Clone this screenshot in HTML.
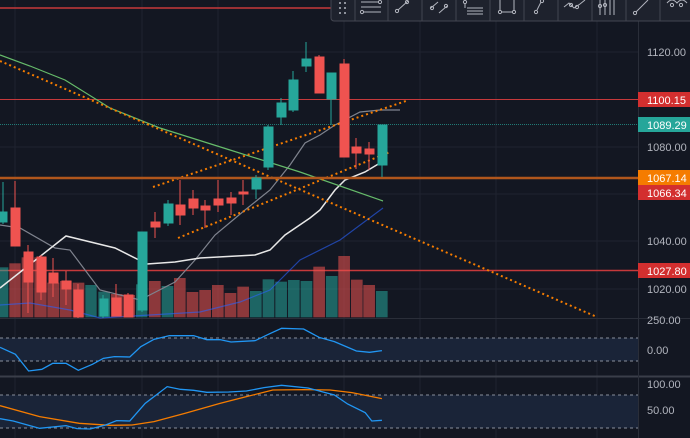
<!DOCTYPE html>
<html><head><meta charset="utf-8"><style>
html,body{margin:0;padding:0;background:#131722;width:690px;height:438px;overflow:hidden;font-family:"Liberation Sans",sans-serif}
svg{display:block}
</style></head><body>
<svg width="690" height="438" viewBox="0 0 690 438" xmlns="http://www.w3.org/2000/svg">
<rect width="690" height="438" fill="#131722"/>
<g stroke="#1f2330" stroke-width="1">
<line x1="15" y1="0" x2="15" y2="438"/><line x1="142" y1="0" x2="142" y2="438"/><line x1="218" y1="0" x2="218" y2="438"/>
<line x1="344" y1="0" x2="344" y2="438"/><line x1="420" y1="0" x2="420" y2="438"/><line x1="496" y1="0" x2="496" y2="438"/><line x1="597" y1="0" x2="597" y2="438"/>
<line x1="0" y1="52" x2="638" y2="52"/><line x1="0" y1="147" x2="638" y2="147"/><line x1="0" y1="194" x2="638" y2="194"/><line x1="0" y1="241" x2="638" y2="241"/><line x1="0" y1="289" x2="638" y2="289"/>
<line x1="0" y1="349" x2="638" y2="349"/><line x1="0" y1="410" x2="638" y2="410"/>
</g>
<rect x="0" y="338" width="638" height="23" fill="#1a2438"/>
<rect x="0" y="395" width="638" height="33" fill="#1a2438"/>
<g stroke="#8a8f9c" stroke-width="1" stroke-dasharray="3,3">
<line x1="0" y1="338" x2="638" y2="338"/><line x1="0" y1="361" x2="638" y2="361"/>
<line x1="0" y1="395" x2="638" y2="395"/><line x1="0" y1="428" x2="638" y2="428"/>
</g>
<line x1="0" y1="318.5" x2="690" y2="318.5" stroke="#2a2e39"/>
<line x1="0" y1="376.5" x2="690" y2="376.5" stroke="#3a3e49" stroke-width="2"/>
<line x1="638.5" y1="0" x2="638.5" y2="438" stroke="#2a2e39"/>
<line x1="0" y1="8" x2="690" y2="8" stroke="#c6393b" stroke-width="1.5"/>
<line x1="0" y1="99.5" x2="638" y2="99.5" stroke="#c6393b"/>
<line x1="0" y1="124.5" x2="638" y2="124.5" stroke="#26a69a" stroke-dasharray="1,1" opacity="0.7"/>
<line x1="0" y1="270.5" x2="638" y2="270.5" stroke="#c6393b" stroke-width="1.5"/>
<g transform="translate(0,150) scale(0.3333)" opacity="0.55">
<rect x="0" y="352" width="25" height="150" fill="#26a69a"/>
<rect x="28" y="340" width="34" height="162" fill="#ef5350"/>
<rect x="65" y="322" width="35" height="180" fill="#ef5350"/>
<rect x="103" y="322" width="37" height="180" fill="#ef5350"/>
<rect x="142" y="398" width="36" height="104" fill="#ef5350"/>
<rect x="180" y="393" width="35" height="109" fill="#ef5350"/>
<rect x="218" y="398" width="35" height="104" fill="#ef5350"/>
<rect x="256" y="405" width="34" height="97" fill="#26a69a"/>
<rect x="295" y="425" width="35" height="77" fill="#26a69a"/>
<rect x="333" y="432" width="35" height="70" fill="#ef5350"/>
<rect x="371" y="435" width="34" height="67" fill="#ef5350"/>
<rect x="408" y="403" width="34" height="99" fill="#26a69a"/>
<rect x="447" y="393" width="35" height="109" fill="#ef5350"/>
<rect x="485" y="408" width="35" height="94" fill="#26a69a"/>
<rect x="522" y="384" width="35" height="118" fill="#ef5350"/>
<rect x="560" y="426" width="35" height="76" fill="#ef5350"/>
<rect x="598" y="420" width="35" height="82" fill="#ef5350"/>
<rect x="636" y="405" width="35" height="97" fill="#ef5350"/>
<rect x="674" y="429" width="35" height="73" fill="#ef5350"/>
<rect x="712" y="410" width="35" height="92" fill="#ef5350"/>
<rect x="750" y="423" width="35" height="79" fill="#26a69a"/>
<rect x="788" y="388" width="35" height="114" fill="#26a69a"/>
<rect x="826" y="395" width="35" height="107" fill="#26a69a"/>
<rect x="864" y="390" width="35" height="112" fill="#26a69a"/>
<rect x="902" y="393" width="35" height="109" fill="#26a69a"/>
<rect x="940" y="350" width="35" height="152" fill="#ef5350"/>
<rect x="978" y="378" width="35" height="124" fill="#26a69a"/>
<rect x="1015" y="318" width="35" height="184" fill="#ef5350"/>
<rect x="1053" y="389" width="35" height="113" fill="#ef5350"/>
<rect x="1090" y="405" width="35" height="97" fill="#ef5350"/>
<rect x="1128" y="423" width="35" height="79" fill="#26a69a"/>
</g>
<polyline fill="none" stroke="#2962ff" stroke-width="1.2" opacity="0.6" points="0,305 30,303 70,310 100,318 150,315 200,312 240,302 270,290 300,260 340,240 383,208"/>
<polyline fill="none" stroke="#7f838e" stroke-width="1.2" points="0,225 20,228 55,248 70,250 100,290 140,300 175,282 195,260 215,235 245,210 270,190 290,165 305,143 320,135 335,125 360,112 380,110 400,110"/>
<polyline fill="none" stroke="#e8e8e8" stroke-width="1.5" points="0,288 66,236 115,248 147,264 175,262 200,258 255,255 270,250 285,235 310,218 320,210 335,190 345,180 365,172 380,163"/>
<polyline fill="none" stroke="#66bb6a" stroke-width="1.2" points="0,55 30,66 65,80 110,108 160,128 230,150 300,172 383,201"/>
<g stroke="#f57c00" stroke-width="2" stroke-dasharray="2,3" fill="none">
<line x1="0" y1="61" x2="597" y2="317"/>
<line x1="153" y1="187" x2="406" y2="101"/>
<line x1="178" y1="238" x2="390" y2="152"/>
</g>
<line x1="0" y1="178" x2="690" y2="178" stroke="#b0561c" stroke-width="2.5"/>
<g stroke-width="1">
<g stroke="#26a69a" fill="#26a69a">
<line x1="3" y1="182" x2="3" y2="224"/><rect x="-2" y="212" width="9" height="10"/>
<line x1="142" y1="232" x2="142" y2="312"/><rect x="138" y="232" width="9" height="78"/>
<line x1="168" y1="200" x2="168" y2="226"/><rect x="164" y="204" width="9" height="19"/>
<line x1="256" y1="175" x2="256" y2="199"/><rect x="252" y="178" width="9" height="11"/>
<line x1="268" y1="125" x2="268" y2="170"/><rect x="264" y="127" width="9" height="40"/>
<line x1="281" y1="98" x2="281" y2="125"/><rect x="277" y="103" width="9" height="14"/>
<line x1="293" y1="71" x2="293" y2="112"/><rect x="289" y="80" width="9" height="30"/>
<line x1="306" y1="42" x2="306" y2="72"/><rect x="302" y="59" width="9" height="7"/>
<line x1="331" y1="99" x2="331" y2="125"/><rect x="327" y="73" width="9" height="26"/>
<line x1="382" y1="165" x2="382" y2="177"/><rect x="378" y="125" width="9" height="40"/>
<line x1="103" y1="295" x2="103" y2="318"/><rect x="100" y="299" width="8" height="17"/>
</g>
<g stroke="#ef5350" fill="#ef5350">
<line x1="15" y1="181" x2="15" y2="246"/><rect x="11" y="208" width="9" height="38"/>
<line x1="28" y1="245" x2="28" y2="313"/><rect x="24" y="252" width="9" height="30"/>
<line x1="41" y1="255" x2="41" y2="300"/><rect x="37" y="257" width="9" height="35"/>
<line x1="53" y1="258" x2="53" y2="297"/><rect x="49" y="273" width="9" height="10"/>
<line x1="66" y1="271" x2="66" y2="305"/><rect x="62" y="281" width="9" height="8"/>
<line x1="78" y1="284" x2="78" y2="318"/><rect x="74" y="290" width="9" height="27"/>
<line x1="116" y1="284" x2="116" y2="316"/><rect x="112" y="298" width="9" height="18"/>
<line x1="128" y1="293" x2="128" y2="317"/><rect x="124" y="295" width="9" height="22"/>
<line x1="155" y1="212" x2="155" y2="238"/><rect x="151" y="222" width="9" height="5"/>
<line x1="180" y1="180" x2="180" y2="225"/><rect x="176" y="205" width="9" height="10"/>
<line x1="193" y1="190" x2="193" y2="215"/><rect x="189" y="199" width="9" height="9"/>
<line x1="205" y1="200" x2="205" y2="228"/><rect x="201" y="206" width="9" height="4"/>
<line x1="218" y1="180" x2="218" y2="212"/><rect x="214" y="199" width="9" height="6"/>
<line x1="231" y1="192" x2="231" y2="215"/><rect x="227" y="198" width="9" height="5"/>
<line x1="243" y1="180" x2="243" y2="205"/><rect x="239" y="192" width="9" height="2"/>
<line x1="319" y1="55" x2="319" y2="93"/><rect x="315" y="57" width="9" height="36"/>
<line x1="344" y1="59" x2="344" y2="157"/><rect x="340" y="64" width="9" height="93"/>
<line x1="356" y1="138" x2="356" y2="169"/><rect x="352" y="147" width="9" height="6"/>
<line x1="369" y1="142" x2="369" y2="170"/><rect x="365" y="149" width="9" height="5"/>
</g>
</g>
<g transform="translate(0,310) scale(0.44,0.3333)" fill="none">
<polyline vector-effect="non-scaling-stroke" stroke="#2196f3" stroke-width="1.3" points="0,112 35,133 65,183 95,178 120,160 150,160 178,181 210,163 235,145 260,140 295,141 320,110 350,88 385,77 440,77 470,89 500,89 525,96 580,92 610,73 640,55 690,57 725,82 760,95 810,123 840,127 868,122"/>
<polyline vector-effect="non-scaling-stroke" stroke="#f57c00" stroke-width="1.3" points="0,287 90,320 180,340 250,346 300,345 350,335 420,310 500,280 560,260 620,240 690,239 750,240 800,248 868,266"/>
<polyline vector-effect="non-scaling-stroke" stroke="#2196f3" stroke-width="1.3" points="0,326 30,333 90,355 150,347 175,356 205,357 240,345 265,332 295,333 330,280 380,230 410,238 440,241 470,247 520,246 560,243 600,233 640,226 700,234 760,255 790,282 830,308 845,333 868,331"/>
</g>
<g font-size="11" fill="#b2b5be" font-family="Liberation Sans, sans-serif">
<text x="647" y="56">1120.00</text>
<text x="647" y="151">1080.00</text>
<text x="647" y="245">1040.00</text>
<text x="647" y="293">1020.00</text>
<text x="647" y="324">250.00</text>
<text x="647" y="354">0.00</text>
<text x="647" y="388">100.00</text>
<text x="647" y="414">50.00</text>
</g>
<g font-size="11" fill="#ffffff" font-family="Liberation Sans, sans-serif">
<rect x="638" y="92" width="52" height="15" fill="#d32f2f"/><text x="647" y="104">1100.15</text>
<rect x="638" y="117" width="52" height="15" fill="#26a69a"/><text x="647" y="129">1089.29</text>
<rect x="638" y="170" width="52" height="15" fill="#f57c00"/><text x="647" y="182">1067.14</text>
<rect x="638" y="185" width="52" height="15" fill="#d32f2f"/><text x="647" y="197">1066.34</text>
<rect x="638" y="263" width="52" height="15" fill="#d32f2f"/><text x="647" y="275">1027.80</text>
</g>
<rect x="331" y="-4" width="365" height="25" rx="3" fill="#1e222d" stroke="#434651"/>
<g stroke="#434651"><line x1="355" y1="0" x2="355" y2="21"/><line x1="388" y1="0" x2="388" y2="21"/><line x1="422" y1="0" x2="422" y2="21"/><line x1="456" y1="0" x2="456" y2="21"/><line x1="490" y1="0" x2="490" y2="21"/><line x1="524" y1="0" x2="524" y2="21"/><line x1="558" y1="0" x2="558" y2="21"/><line x1="592" y1="0" x2="592" y2="21"/><line x1="626" y1="0" x2="626" y2="21"/><line x1="660" y1="0" x2="660" y2="21"/></g>
<g fill="#b2b5be"><circle cx="340" cy="3" r="1"/><circle cx="345" cy="3" r="1"/><circle cx="340" cy="8" r="1"/><circle cx="345" cy="8" r="1"/><circle cx="340" cy="13" r="1"/><circle cx="345" cy="13" r="1"/></g>
<g stroke="#b2b5be" stroke-width="1" fill="none">
<line x1="361" y1="2" x2="378" y2="2"/><line x1="361" y1="7" x2="381" y2="7"/><line x1="364" y1="12" x2="381" y2="12"/><circle cx="380" cy="2" r="1.6"/><circle cx="362" cy="12" r="1.6"/>
<line x1="398" y1="10" x2="408" y2="1"/><circle cx="397" cy="11" r="1.6"/><circle cx="407" cy="2" r="1.6"/>
<line x1="431" y1="8" x2="438" y2="2"/><line x1="439" y1="13" x2="447" y2="6"/><circle cx="432" cy="8" r="1.6"/><circle cx="446" cy="6" r="1.6"/>
<circle cx="465" cy="2" r="1.6"/><line x1="465" y1="4" x2="465" y2="8"/><line x1="467" y1="8" x2="483" y2="8"/><line x1="467" y1="11" x2="483" y2="11"/><line x1="467" y1="14" x2="483" y2="14"/>
<line x1="500" y1="0" x2="500" y2="11"/><line x1="514" y1="0" x2="514" y2="11"/><line x1="502" y1="12" x2="512" y2="12"/><circle cx="500" cy="12" r="1.6"/><circle cx="514" cy="12" r="1.6"/>
<line x1="537" y1="10" x2="541" y2="2"/><circle cx="536" cy="12" r="1.6"/><circle cx="542" cy="1" r="1.6"/>
<polyline points="564,7 569,3 574,8 580,4 585,0"/><circle cx="571" cy="5" r="1.6"/><circle cx="577" cy="7" r="1.6"/>
<line x1="600" y1="0" x2="600" y2="15"/><line x1="605" y1="0" x2="605" y2="15"/><line x1="610" y1="0" x2="610" y2="15"/><line x1="614" y1="0" x2="614" y2="15"/><circle cx="600" cy="6" r="1.6"/><circle cx="605" cy="5" r="1.6"/>
<line x1="636" y1="12" x2="648" y2="0"/><circle cx="635" cy="13" r="1.6"/>
<path d="M667,3 Q672,-3 677,3 Q682,-3 687,3"/><circle cx="672" cy="5" r="1.6"/><circle cx="681" cy="5" r="1.6"/>
</g>
</svg>
</body></html>
